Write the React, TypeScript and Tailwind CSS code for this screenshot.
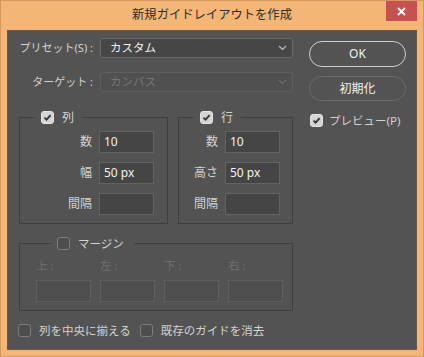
import React from 'react';

const font = { fontFamily: '"Noto Sans", "Noto Sans CJK JP", sans-serif' };

function Check({ checked }: { checked?: boolean }) {
  if (checked) {
    return (
      <span className="flex h-[13px] w-[13px] shrink-0 items-center justify-center rounded-[3px] border border-[#e4e4e4] bg-[#d4d4d4]">
        <svg width="9" height="9" viewBox="0 0 9 9">
          <path d="M1.5 4.6 L3.6 6.7 L7.6 2.2" fill="none" stroke="#333" strokeWidth="1.8" />
        </svg>
      </span>
    );
  }
  return <span className="block h-[13px] w-[13px] shrink-0 rounded-[3px] border border-[#7c7c7c] bg-[#4d4d4d]" />;
}

function Field({ label, value }: { label: string; value?: string }) {
  return (
    <div className="flex items-center justify-end gap-[7px]">
      <span className="text-[12px] leading-none text-[#d2d2d2]">{label}</span>
      <div className="flex h-[22px] w-[55px] items-center border border-[#626262] bg-[#454545] pl-[4px] text-[12px] text-[#f2f2f2]">
        {value}
      </div>
    </div>
  );
}

function Chevron({ color }: { color: string }) {
  return (
    <svg width="9" height="6" viewBox="0 0 9 6" className="ml-auto mr-[5px]">
      <path d="M1 1 L4.5 4.5 L8 1" fill="none" stroke={color} strokeWidth="1.2" />
    </svg>
  );
}

export default function App() {
  return (
    <div style={font} className="relative h-[357px] w-[424px] border border-[#d49a5f] bg-[#f3b676] px-[6px] pb-[6px]">
      <div className="flex h-[29px] items-center justify-center pb-[1px] text-[12.3px] text-[#2e2e2e]">
        新規ガイドレイアウトを作成
      </div>
      <div className="absolute right-[6px] top-0 flex h-[20px] w-[31px] items-center justify-center bg-[#c75050]">
        <svg width="9" height="9" viewBox="0 0 9 9">
          <path d="M1 1 L8 8 M8 1 L1 8" stroke="#fff" strokeWidth="1.8" />
        </svg>
      </div>

      <div className="flex h-[320px] border border-[#6e5a46] bg-[#535353] pt-[7px]">
        <div className="flex w-[286px] flex-col">
          <div className="flex h-[20px] items-center">
            <span className="w-[85px] text-right text-[11px] text-[#d2d2d2]">プリセット(S) :</span>
            <div className="ml-[7px] flex h-[20px] w-[193px] items-center rounded-[3px] border border-[#6a6a6a] bg-[#464646] pl-[9px] text-[11.5px] text-[#f2f2f2]">
              カスタム
              <Chevron color="#bdbdbd" />
            </div>
          </div>
          <div className="mt-[14px] flex h-[20px] items-center">
            <span className="w-[85px] text-right text-[11px] text-[#d2d2d2]">ターゲット :</span>
            <div className="ml-[7px] flex h-[20px] w-[193px] items-center rounded-[3px] border border-[#5e5e5e] bg-[#505050] pl-[9px] text-[11.5px] text-[#767676]">
              カンバス
              <Chevron color="#6c6c6c" />
            </div>
          </div>

          <div className="ml-[11px] mt-[19px] flex gap-[10px]">
            <fieldset className="w-[149px] border border-[#3f3f3f] pb-[8px] pr-[13px]">
              <legend className="ml-[15px] flex h-[13px] items-center gap-[8px] pl-[6px] pr-[8px] text-[12px] text-[#d2d2d2]">
                <Check checked />
                列
              </legend>
              <div className="flex flex-col gap-[9px] pt-[7px]">
                <Field label="数" value="10" />
                <Field label="幅" value="50 px" />
                <Field label="間隔" />
              </div>
            </fieldset>
            <fieldset className="w-[115px] border border-[#3f3f3f] pb-[8px] pr-[12px]">
              <legend className="ml-[15px] flex h-[13px] items-center gap-[8px] pl-[6px] pr-[8px] text-[12px] text-[#d2d2d2]">
                <Check checked />
                行
              </legend>
              <div className="flex flex-col gap-[9px] pt-[7px]">
                <Field label="数" value="10" />
                <Field label="高さ" value="50 px" />
                <Field label="間隔" />
              </div>
            </fieldset>
          </div>

          <fieldset className="ml-[11px] mt-[13px] w-[274px] border border-[#3f3f3f] pb-[8px] pl-[16px]">
            <legend className="ml-[15px] flex h-[13px] items-center gap-[8px] pl-[6px] pr-[10px] text-[11.5px] text-[#d2d2d2]">
              <Check />
              マージン
            </legend>
            <div className="grid grid-cols-[55px_55px_55px_55px] gap-x-[9px] gap-y-[7px] pt-[9px] text-[11.5px] leading-[14px] text-[#6e6e6e]">
              <span>上 :</span>
              <span>左 :</span>
              <span>下 :</span>
              <span>右 :</span>
              <div className="h-[22px] border border-[#5e5e5e] bg-[#4e4e4e]" />
              <div className="h-[22px] border border-[#5e5e5e] bg-[#4e4e4e]" />
              <div className="h-[22px] border border-[#5e5e5e] bg-[#4e4e4e]" />
              <div className="h-[22px] border border-[#5e5e5e] bg-[#4e4e4e]" />
            </div>
          </fieldset>

          <div className="ml-[10px] mt-[13px] flex items-center text-[11.5px] leading-none text-[#d2d2d2]">
            <Check />
            <span className="ml-[8px]">列を中央に揃える</span>
            <span className="ml-[9px] flex">
              <Check />
            </span>
            <span className="ml-[8px]">既存のガイドを消去</span>
          </div>
        </div>

        <div className="ml-[15px] flex w-[97px] flex-col pt-[3px]">
          <div className="flex h-[26px] items-center justify-center rounded-full border-[1.5px] border-[#cfcfcf] text-[12px] text-[#f2f2f2]">
            OK
          </div>
          <div className="mt-[9px] flex h-[25px] items-center justify-center rounded-full border-[1.5px] border-[#6c6c6c] text-[12px] text-[#f2f2f2]">
            初期化
          </div>
          <div className="ml-[1px] mt-[13px] flex items-center gap-[6px] text-[11.5px] leading-none text-[#d2d2d2]">
            <Check checked />
            プレビュー(P)
          </div>
        </div>
      </div>
    </div>
  );
}
